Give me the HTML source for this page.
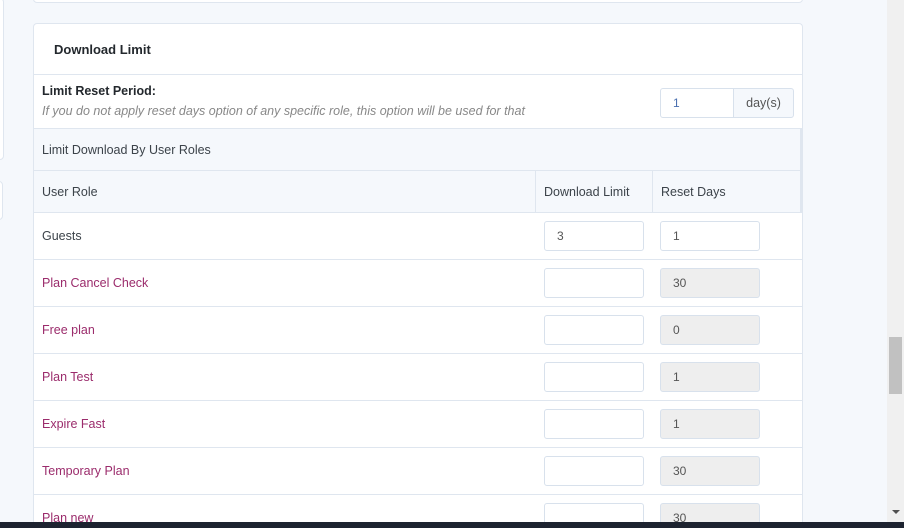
<!DOCTYPE html>
<html style="overflow:hidden;height:528px"><head><style>
body{margin:0;width:904px;height:528px;overflow:hidden;background:#f5f8fc;font-family:"Liberation Sans",sans-serif;font-size:12.5px;color:#3c434a;position:relative}
.abs{position:absolute;box-sizing:border-box}
.card{left:33px;top:23px;width:770px;height:505px;background:#fff;border:1px solid #dfe6ef;border-bottom:none;border-radius:4px 4px 0 0;overflow:hidden}
.row{position:absolute;left:0;width:768px;border-bottom:1px solid #dfe6ef;box-sizing:border-box}
.inp{position:absolute;box-sizing:border-box;height:30px;width:100px;border:1px solid #d8e1ec;border-radius:3px;background:#fff;padding:0 12px;line-height:28px;color:#555;font-size:12px}
.dis{background:#eee}
.role{position:absolute;left:8px;color:#9b2c6c}
</style></head><body>
<div class="abs" style="left:33px;top:-6px;width:770px;height:9px;background:#fff;border:1px solid #dfe6ef;border-radius:4px"></div>
<div class="abs" style="left:-6px;top:-2px;width:10px;height:162px;background:#fff;border:1px solid #dfe6ef;border-radius:4px"></div>
<div class="abs" style="left:-6px;top:181px;width:9px;height:39px;background:#fff;border:1px solid #dfe6ef;border-radius:4px"></div>
<div class="abs card">
 <div class="row" style="top:0;height:51px"><span style="position:absolute;left:20px;top:18px;font-weight:bold;font-size:13px;color:#23282d">Download Limit</span></div>
 <div class="row" style="top:51px;height:54px">
  <span style="position:absolute;left:8px;top:9px;font-weight:bold;color:#23282d">Limit Reset Period:</span>
  <span style="position:absolute;left:8px;top:29px;font-style:italic;color:#888">If you do not apply reset days option of any specific role, this option will be used for that</span>
  <div class="inp" style="left:626px;top:13px;width:74px;border-radius:3px 0 0 3px;color:#4a6fb0">1</div>
  <div class="inp" style="left:699px;top:13px;width:61px;background:#f5f8fc;border-radius:0 3px 3px 0;text-align:center;padding:0;font-size:12.5px">day(s)</div>
 </div>
 <div class="row" style="top:105px;height:42px;background:#f5f8fc;border-right:2px solid #dfe6ef"><span style="position:absolute;left:8px;top:14px">Limit Download By User Roles</span></div>
 <div class="row" style="top:147px;height:42px;background:#f5f8fc;border-right:2px solid #dfe6ef">
  <span style="position:absolute;left:8px;top:14px">User Role</span>
  <div style="position:absolute;left:501px;top:0;height:41px;border-left:1px solid #dfe6ef"></div>
  <span style="position:absolute;left:510px;top:14px">Download Limit</span>
  <div style="position:absolute;left:618px;top:0;height:41px;border-left:1px solid #dfe6ef"></div>
  <span style="position:absolute;left:627px;top:14px">Reset Days</span>
 </div>
 <div class="row" style="top:189px;height:47px"><span class="role" style="top:16px;color:#3c434a">Guests</span><div class="inp" style="left:510px;top:8px">3</div><div class="inp" style="left:626px;top:8px">1</div></div>
 <div class="row" style="top:236px;height:47px"><span class="role" style="top:16px">Plan Cancel Check</span><div class="inp" style="left:510px;top:8px"></div><div class="inp dis" style="left:626px;top:8px">30</div></div>
 <div class="row" style="top:283px;height:47px"><span class="role" style="top:16px">Free plan</span><div class="inp" style="left:510px;top:8px"></div><div class="inp dis" style="left:626px;top:8px">0</div></div>
 <div class="row" style="top:330px;height:47px"><span class="role" style="top:16px">Plan Test</span><div class="inp" style="left:510px;top:8px"></div><div class="inp dis" style="left:626px;top:8px">1</div></div>
 <div class="row" style="top:377px;height:47px"><span class="role" style="top:16px">Expire Fast</span><div class="inp" style="left:510px;top:8px"></div><div class="inp dis" style="left:626px;top:8px">1</div></div>
 <div class="row" style="top:424px;height:47px"><span class="role" style="top:16px">Temporary Plan</span><div class="inp" style="left:510px;top:8px"></div><div class="inp dis" style="left:626px;top:8px">30</div></div>
 <div class="row" style="top:471px;height:47px"><span class="role" style="top:16px">Plan new</span><div class="inp" style="left:510px;top:8px"></div><div class="inp dis" style="left:626px;top:8px">30</div></div>
</div>
<div class="abs" style="left:887px;top:0;width:17px;height:522px;background:#f0f0f0"></div>
<div class="abs" style="left:889px;top:337px;width:13px;height:57px;background:#c1c1c1"></div>
<div class="abs" style="left:892px;top:510px;width:0;height:0;border-left:4px solid transparent;border-right:4px solid transparent;border-top:4px solid #505050"></div>
<div class="abs" style="left:0;top:522px;width:904px;height:6px;background:#1d2330"></div>
</body></html>
